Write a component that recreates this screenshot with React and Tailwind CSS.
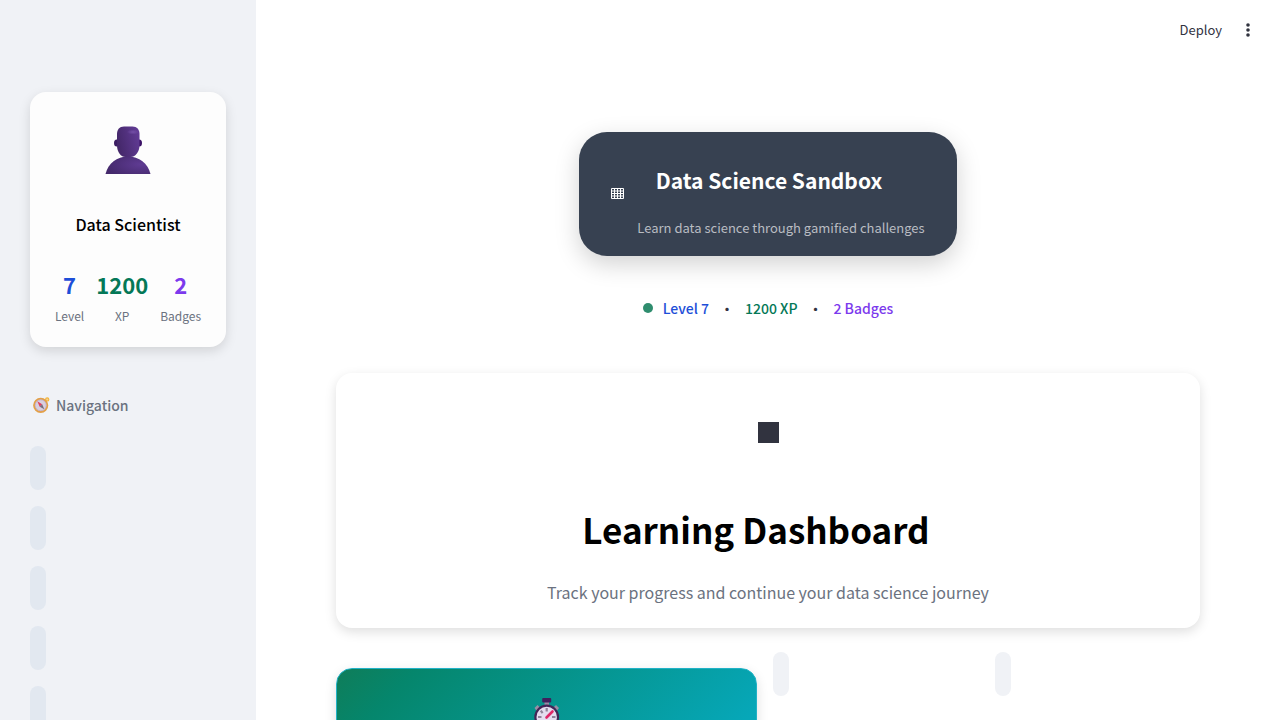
import React from "react";

const playerStats = [
  { value: "7", label: "Level", color: "text-[#1d4ed8]" },
  { value: "1200", label: "XP", color: "text-[#047857]" },
  { value: "2", label: "Badges", color: "text-[#7c3aed]" },
];

const navItems = ["Dashboard", "Levels", "Badges", "Sandbox", "Settings"];

function UserIcon() {
  return (
    <svg viewBox="0 0 48 50" className="h-[50px] w-12" aria-hidden="true">
      <defs>
        <linearGradient id="head" x1="0" y1="0.6" x2="1" y2="0.3">
          <stop offset="0" stopColor="#432768" />
          <stop offset="1" stopColor="#613b95" />
        </linearGradient>
        <radialGradient id="body" cx="0.78" cy="0.45" r="0.8">
          <stop offset="0" stopColor="#5f3b93" />
          <stop offset="1" stopColor="#44296b" />
        </radialGradient>
        <radialGradient id="shine">
          <stop offset="0" stopColor="#7550a8" />
          <stop offset="1" stopColor="#7550a8" stopOpacity="0" />
        </radialGradient>
      </defs>
      <ellipse cx="12.8" cy="18" rx="2.8" ry="3.6" fill="#3b1d62" />
      <ellipse cx="35.2" cy="18" rx="2.8" ry="3.6" fill="#3b1266" />
      <path d="M1.500 49C4 38.500 13 31.500 24 31.500S44 38.500 46.500 49Z" fill="url(#body)" />
      <path d="M20 1.500h8.500c4.500 0 7 3 7 7.500v11c0 7.500-4.500 12-9 12h-5C17 32 13 27.500 13 20V9c0-4.500 2.500-7.500 7-7.500Z" fill="url(#head)" />
      <ellipse cx="29" cy="7" rx="6" ry="2.500" fill="url(#shine)" />
    </svg>
  );
}

function CompassIcon() {
  return (
    <svg viewBox="0 0 17 16" className="h-4 w-[17px]" aria-hidden="true">
      <circle cx="14.200" cy="2.400" r="1.600" fill="#f7d58f" stroke="#f3b63f" strokeWidth="1.200" />
      <circle cx="7.700" cy="8.300" r="6.700" fill="#d8cfe0" stroke="#e3a047" strokeWidth="1.800" />
      <circle cx="7.700" cy="8.300" r="5.500" fill="none" stroke="#b9a3bd" strokeWidth="0.600" />
      <path d="M4.300 4.300 9.200 7.200 6.700 9.700Z" fill="#e0405f" />
      <path d="M11.300 12.300 9.200 7.200 6.700 9.700Z" fill="#777080" />
    </svg>
  );
}

function StopwatchIcon() {
  return (
    <svg viewBox="0 0 28 36" className="h-9 w-7" aria-hidden="true">
      <rect x="11.500" y="4" width="4.500" height="5" fill="#998ca5" />
      <rect x="9.200" y="0" width="9" height="4.600" rx="1" fill="#40205d" />
      <path d="m1.500 10 3-3 3 3-3 4Z" fill="#998ea5" />
      <path d="m26 10-3-3-3 3 3 4Z" fill="#998ea5" />
      <circle cx="13.700" cy="19" r="11.300" fill="#e4dcef" stroke="#432657" strokeWidth="2.200" />
      <path d="M13.700 10v3.500M7.800 12.700l1.800 2.500M5 19h3.500M19 19h3.500M13.700 24.500V28" stroke="#8f8399" strokeWidth="2.200" />
      <path d="m13.500 19.500 6-6" stroke="#df2768" strokeWidth="2.600" strokeLinecap="round" />
    </svg>
  );
}

function Sidebar() {
  return (
    <aside className="w-64 shrink-0 bg-[#f0f2f6] px-[30px] pt-[92px]">
      <section className="flex flex-col items-center rounded-2xl bg-[#fdfdfd] px-4 pt-[33px] pb-[21px] shadow-[0_4px_12px_rgba(0,0,0,0.13)]">
        <UserIcon />
        <h3 className="mt-[35px] text-[16px] leading-7 font-medium text-black">Data Scientist</h3>
        <dl className="mt-7 flex gap-3">
          {playerStats.map((s) => (
            <div key={s.label} className="flex flex-col-reverse items-center">
              <dt className="mt-1 text-[12px] leading-5 text-[#6b7280]">{s.label}</dt>
              <dd className={`text-[22px] leading-9 font-bold ${s.color}`}>{s.value}</dd>
            </div>
          ))}
        </dl>
      </section>
      <h2 className="mt-[46px] flex items-center gap-[6px] pl-[3px] text-[14px] leading-6 font-medium text-[#6b7280]">
        <CompassIcon />
        Navigation
      </h2>
      <nav className="mt-[29px] flex flex-col items-start gap-4">
        {navItems.map((name) => (
          <button key={name} aria-label={name} className="h-11 w-4 rounded-full bg-[#e2e8f0]" />
        ))}
      </nav>
    </aside>
  );
}

function TopBar() {
  return (
    <header className="flex h-[60px] items-center justify-end gap-[18px] pr-6">
      <button className="text-[13px] leading-6 text-[#31333f]">Deploy</button>
      <button aria-label="Main menu" className="flex w-4 justify-center">
        <svg viewBox="0 0 4 14" className="h-[14px] w-1" fill="#31333f" aria-hidden="true">
          <circle cx="2" cy="2" r="1.800" />
          <circle cx="2" cy="7" r="1.800" />
          <circle cx="2" cy="12" r="1.800" />
        </svg>
      </button>
    </header>
  );
}

function Brand() {
  return (
    <section className="flex items-start gap-[13px] rounded-[28px] bg-[#374151] px-8 pt-[30px] pb-4 shadow-[0_8px_24px_rgba(0,0,0,0.18)]">
      <svg viewBox="0 0 13 11" className="mt-[26px] h-[11px] w-[13px] shrink-0" aria-hidden="true">
        <path d="M.5.5h12v10H.5zM.5 3h12M.5 5.500h12M.5 8h12M3.500.5v10M6.500.5v10M9.500.5v10" fill="none" stroke="#fff" />
      </svg>
      <div className="text-center">
        <h1 className="pr-6 text-[21px] leading-9 font-bold text-white">Data Science Sandbox</h1>
        <p className="mt-[18px] text-[13px] leading-6 text-[#b9bcc2]">Learn data science through gamified challenges</p>
      </div>
    </section>
  );
}

function StatusLine() {
  return (
    <div className="mt-10 flex items-center text-[14px] leading-6 font-medium">
      <span className="mr-[10px] size-[10px] rounded-full bg-[#2f8d6e]" />
      <span className="text-[#1d4ed8]">Level 7</span>
      <span className="mx-[11px] text-[#31333f]">•</span>
      <span className="text-[#047857]">1200 XP</span>
      <span className="mx-[11px] text-[#31333f]">•</span>
      <span className="text-[#7c3aed]">2 Badges</span>
    </div>
  );
}

export default function App() {
  return (
    <div className="flex h-screen overflow-hidden bg-white font-['Noto_Sans_CJK_SC','Noto_Sans',sans-serif]">
      <Sidebar />
      <div className="min-w-0 flex-1">
        <TopBar />
        <main className="flex flex-col items-center px-20 pt-[72px]">
          <Brand />
          <StatusLine />
          <section className="mt-[53px] flex w-full flex-col items-center rounded-2xl bg-white pt-[49px] pb-[22px] shadow-[0_4px_12px_rgba(0,0,0,0.13)]">
            <svg viewBox="0 0 21 21" className="size-[21px]" aria-hidden="true">
              <rect width="21" height="21" fill="#31333f" />
            </svg>
            <h2 className="mt-[58px] pr-6 text-[35px] leading-[56px] font-bold text-black">Learning Dashboard</h2>
            <p className="mt-[21px] text-[16px] leading-7 text-[#6b7280]">Track your progress and continue your data science journey</p>
          </section>
          <div className="mt-6 grid w-full grid-cols-[421fr_206fr_205fr] gap-4">
            <section className="mt-4 flex h-[240px] justify-center rounded-2xl border border-[#20b2c6] bg-[linear-gradient(135deg,#0f7d59_0%,#05866c_12%,#06a7b8_70%)] pt-[29px] shadow-[0_4px_12px_rgba(0,0,0,0.13)]">
              <StopwatchIcon />
            </section>
            <button aria-label="Continue" className="h-11 w-4 rounded-full bg-[#f0f2f6]" />
            <button aria-label="Challenges" className="h-11 w-4 rounded-full bg-[#f0f2f6]" />
          </div>
        </main>
      </div>
    </div>
  );
}
